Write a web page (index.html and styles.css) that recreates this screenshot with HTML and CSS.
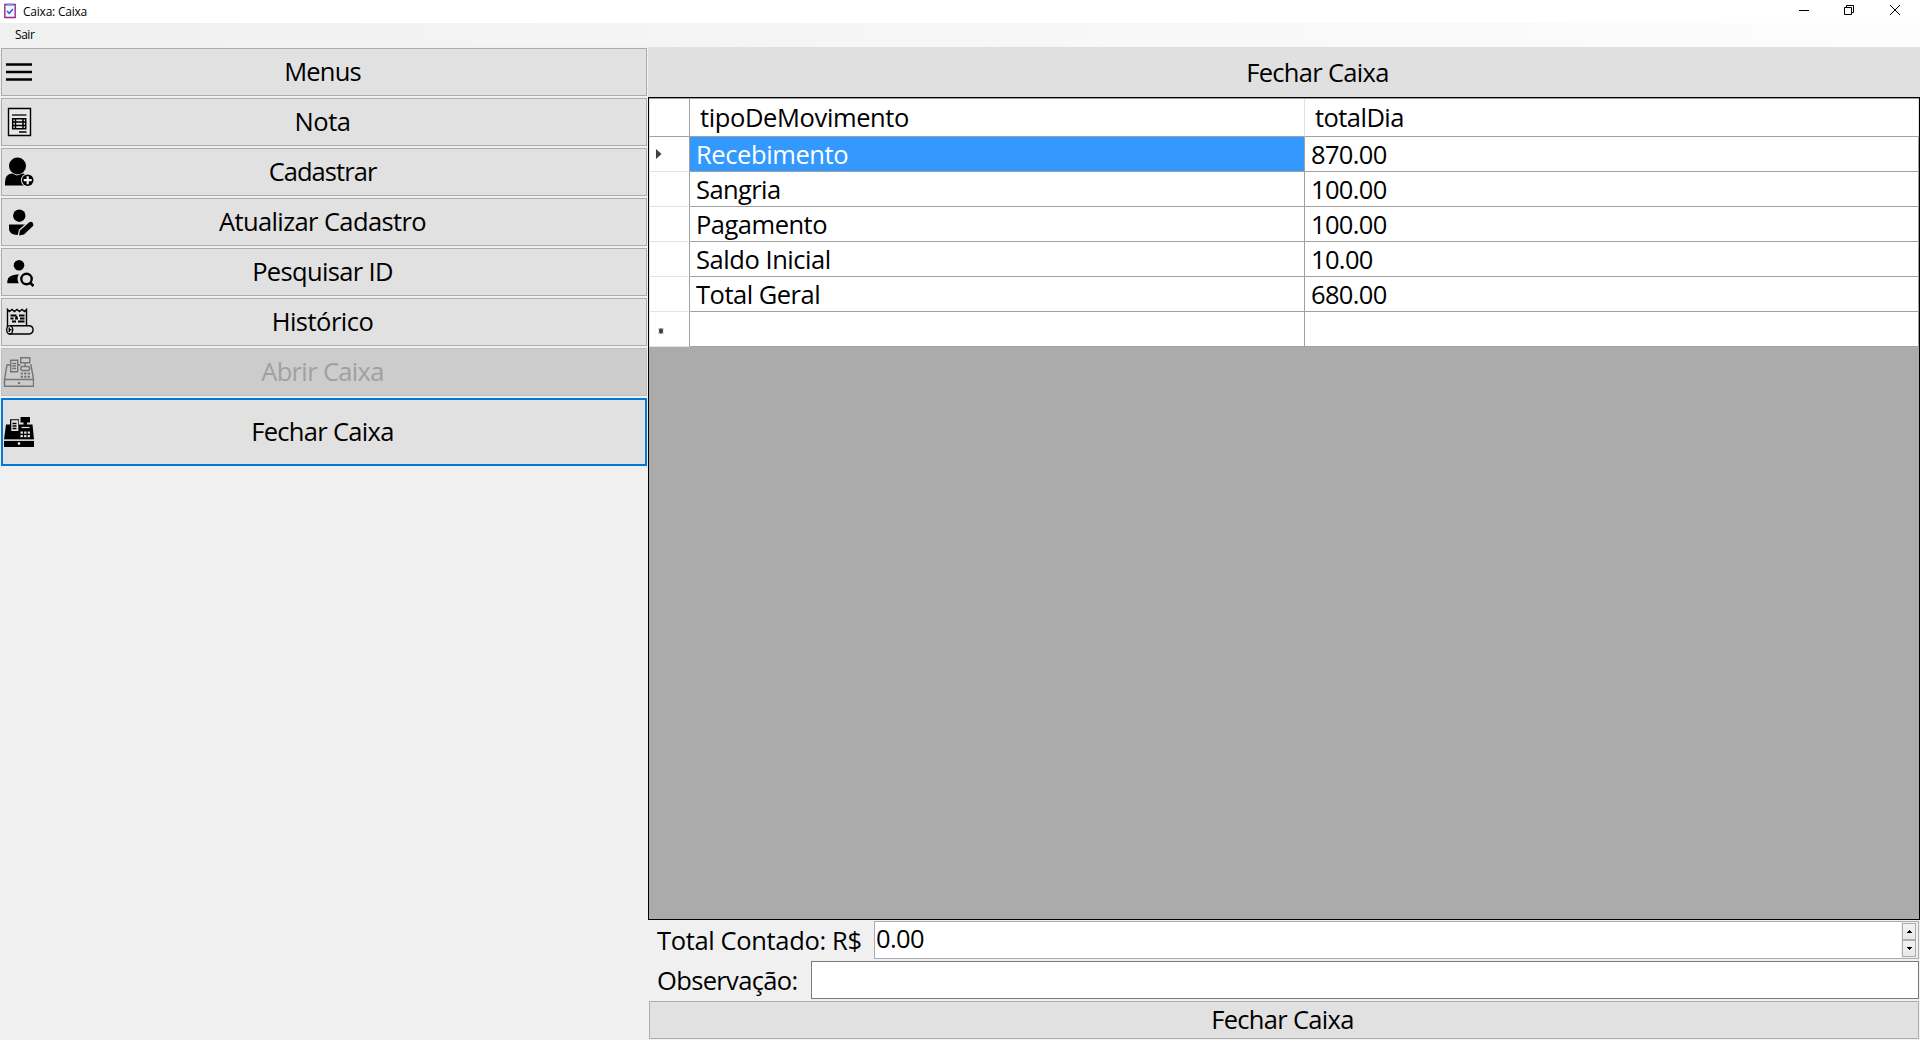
FILE: index.html
```html
<!DOCTYPE html>
<html lang="pt-BR">
<head>
<meta charset="utf-8">
<title>Caixa: Caixa</title>
<link rel="stylesheet" href="styles.css">
</head>
<body>
<div class="window">
  <header class="titlebar">
    <svg class="app-icon" width="12" height="16" viewBox="0 0 12 16"><path d="M.8 1.500h10.400v13H.8z" fill="#f4f6ff" stroke="#96288c" stroke-width="1.400"/><path d="M3 .5h6v2.300H3z" fill="#6d9be0"/><path d="M3 8l2.200 2.300L9 6" fill="none" stroke="#2864d8" stroke-width="1.500"/></svg>
    <span class="title">Caixa: Caixa</span>
    <div class="controls">
      <svg class="minimize" width="10" height="10" viewBox="0 0 10 10"><path d="M0 5.500h10"/></svg>
      <svg width="10" height="10" viewBox="0 0 10 10"><path d="M.5 2.500h7v7h-7zM2.500 2V.5h7v7H8"/></svg>
      <svg width="10" height="10" viewBox="0 0 10 10"><path d="M0 0l10 10M10 0L0 10"/></svg>
    </div>
  </header>
  <nav class="menubar"><span>Sair</span></nav>
  <main class="main">
    <aside class="sidebar">
      <button class="item"><svg class="icon" width="32" height="32" viewBox="0 0 32 32"><path d="M4 8.500h26M4 16h26M4 23.500h26" fill="none" stroke="#000" stroke-width="2.400"/></svg><span class="w-menus">Menus</span></button>
      <button class="item"><svg class="icon" width="32" height="32" viewBox="0 0 32 32"><path d="M6.500 2.500h22v27h-22z" fill="#e9e9e9" stroke="#000" stroke-width="1.400"/><path d="M10 9h14.500" stroke="#555" stroke-width="2"/><path d="M10.700 12.700h13v10h-13zM10 16h14.500M10 19.600h14.500M13.500 12v11.500M21 12v11.500" fill="none" stroke="#000" stroke-width="1.500"/><path d="M17 26h7.500" stroke="#000" stroke-width="1.500"/></svg><span class="w-nota">Nota</span></button>
      <button class="item"><svg class="icon" width="32" height="32" viewBox="0 0 32 32"><ellipse cx="15.500" cy="10" rx="8.500" ry="8.500"/><path d="M3 29.500V26q0-8 7-8.500l5 2 6-2q5 1 6 6v6z"/><circle cx="25.700" cy="24.200" r="6.800" fill="#e1e1e1"/><circle cx="25.700" cy="24.200" r="5.800"/><path d="M25.700 20.200v8M21.700 24.200h8" stroke="#f4f4f4" stroke-width="2.200"/></svg><span class="w-cadastrar">Cadastrar</span></button>
      <button class="item"><svg class="icon" width="32" height="32" viewBox="0 0 32 32"><circle cx="17.300" cy="9.700" r="6.200"/><path d="M7 18.500h17l-7.500 9-1 1.500Q7 28.500 7 23z"/><path d="M17 29.500l1-5 9-8q2-1.500 3.500 0t.5 3.500l-9 8.500z" stroke="#e1e1e1" stroke-width="2.500" paint-order="stroke"/></svg><span class="w-atualizar">Atualizar Cadastro</span></button>
      <button class="item"><svg class="icon" width="32" height="32" viewBox="0 0 32 32"><circle cx="17" cy="9.300" r="5.300"/><path d="M5.300 27.300V25q0-6 11.500-6.700-2.500 4.500 0 9z"/><circle cx="24.500" cy="23" r="5.200" fill="none" stroke="#000" stroke-width="2.400"/><path d="M28 26.500l3.500 3.500" stroke="#000" stroke-width="2.600"/></svg><span class="w-pesquisar">Pesquisar ID</span></button>
      <button class="item"><svg class="icon" width="32" height="32" viewBox="0 0 32 32"><g fill="none" stroke="#000" stroke-width="1.400"><path d="M5.500 21V3.500l2 2 2.500-2 2.500 2 2.500-2 2.500 2 2.500-2 2.500 2 2-2v16"/><path d="M8.500 9.500h6M17 9.500h5.500M8.500 12.500h3M13 12.500h3M18 12.500h4.500M10 15.500h4M16 15.500h6.500M14.500 10v2" stroke-width="1.800"/><path d="M8 19.700h19.500a4.200 4.200 0 0 1 0 8.300H8"/><ellipse cx="7.700" cy="23.800" rx="3" ry="4.200"/><path d="M7.300 21.500v4.500M7.500 23.800h2"/></g></svg><span class="w-historico">Histórico</span></button>
      <button class="item" disabled><svg class="icon" width="32" height="32" viewBox="0 0 32 32"><g fill="none" stroke="#747474" stroke-width="1.400"><path d="M8.500 9H5L2.500 23.500v6.700h29v-6.700L29 9h-1M15.500 9h3"/><path d="M2.500 23.500h29M8.700 4.200h7v11.500h-7zM10.300 7.500h3.800M10.300 10h3.800M10.300 12.500h3.800M18.700 1.700h9v5h-9zM23 6.700v3M18.700 12.500q0-2 2-2h5q2 0 2 2v1q-1 1-2 1h-5q-1 0-2-1z"/><path d="M18.700 17.500h9.300M18.700 20.700h9.300" stroke-width="2" stroke-dasharray="2.300 1.200"/></g><circle cx="17" cy="27" r="1.200" fill="#747474"/></svg><span class="w-abrir">Abrir Caixa</span></button>
      <button class="item active"><svg class="icon" width="32" height="32" viewBox="0 0 32 32"><path d="M4 8.500h4V3.300h9v5.200h4.500v-2h-3V1h9.500v5.500h-3v2h5.500L32 23.500H2zM2 24.700h30V31H2z"/><path d="M9.300 4.300h7V15h-7z" fill="#e1e1e1"/><path d="M10.500 7.500h4M10.500 10h4M10.500 12.500h4" stroke="#000" stroke-width="1.300"/><path d="M19.500 11.500h8" stroke="#e1e1e1" stroke-width="1.200"/><path d="M18.500 16.700h9.500M18.500 20.200h9.500" stroke="#e1e1e1" stroke-width="2.200" stroke-dasharray="2.400 1.200"/><path d="M2 24.200h30" stroke="#e1e1e1" stroke-width="1"/><circle cx="17" cy="27.500" r="1.300" fill="#fff"/></svg><span class="w-fechar">Fechar Caixa</span></button>
    </aside>
    <section class="panel">
      <h1 class="heading"><span class="w-fechar">Fechar Caixa</span></h1>
      <div class="grid">
        <div class="row head"><div class="rh"></div><div class="c1"><span class="w-tipo">tipoDeMovimento</span></div><div class="c2"><span class="w-total-dia">totalDia</span></div></div>
        <div class="row selected"><div class="rh"><svg width="6" height="10" viewBox="0 0 6 10"><path d="M0 0l5.500 5L0 10z" fill="#404040"/></svg></div><div class="c1"><span class="w-receb">Recebimento</span></div><div class="c2"><span class="num">870.00</span></div></div>
        <div class="row"><div class="rh"></div><div class="c1"><span class="w-sangria">Sangria</span></div><div class="c2"><span class="num">100.00</span></div></div>
        <div class="row"><div class="rh"></div><div class="c1"><span class="w-pag">Pagamento</span></div><div class="c2"><span class="num">100.00</span></div></div>
        <div class="row"><div class="rh"></div><div class="c1"><span class="w-saldo">Saldo Inicial</span></div><div class="c2"><span class="num">10.00</span></div></div>
        <div class="row"><div class="rh"></div><div class="c1"><span class="w-geral">Total Geral</span></div><div class="c2"><span class="num">680.00</span></div></div>
        <div class="row new"><div class="rh"><svg width="6" height="6" viewBox="0 0 6 6"><circle cx="3" cy="3" r="2.200" fill="#404040"/><path d="M.3 1h5.400M.3 5h5.400M3 0v6" stroke="#404040" stroke-opacity=".6"/></svg></div><div class="c1"></div><div class="c2"></div></div>
      </div>
      <div class="field"><label class="lab-total"><span class="w-contado">Total Contado: R$</span></label>
        <div class="spin"><span class="num">0.00</span>
          <div class="arrows"><b><svg width="5" height="3" viewBox="0 0 5 3"><path d="M2 0h1v1h1v1h1v1H0V2h1V1h1z"/></svg></b><b><svg width="5" height="3" viewBox="0 0 5 3"><path d="M0 0h5v1H4v1H3v1H2V2H1V1H0z"/></svg></b></div>
        </div>
      </div>
      <div class="field"><label class="lab-obs"><span class="w-obs">Observação:</span></label><div class="text"></div></div>
      <button class="submit"><span class="w-fechar">Fechar Caixa</span></button>
    </section>
  </main>
</div>
</body>
</html>
```
FILE: styles.css
```css
* { box-sizing: border-box; }
body { margin: 0; background: #f0f0f0; color: #000; font: 25.5px/34px "Open Sans", sans-serif; overflow: hidden; }
button { font: inherit; color: inherit; margin: 0; padding: 0; border-radius: 0; }
svg { display: block; flex: none; }
span { white-space: nowrap; }
.window { width: 1920px; height: 1040px; display: flex; flex-direction: column; }
.titlebar { height: 23px; background: #fff; display: flex; align-items: center; padding-left: 4px; font-size: 12px; line-height: 16px; }
.app-icon { margin-top: -2px; }
.title { margin-left: 7px; letter-spacing: -.22px; }
.controls { margin: -3px 20px 0 auto; display: flex; gap: 36px; }
.controls svg { fill: none; stroke: #000; stroke-width: 1; }
.controls .minimize { margin-right: -1px; }
.menubar { height: 24px; padding: 3px 0 0 15px; background: linear-gradient(90deg, #f0f0f0, #fdfdfd); font-size: 12px; line-height: 17px; letter-spacing: -.45px; }
.main { height: 993px; display: flex; }
.sidebar { width: 648px; padding: 1px 1px 0; display: flex; flex-direction: column; gap: 2px; }
.item { width: 646px; height: 48px; border: 1px solid #adadad; background: #e1e1e1; display: grid; align-items: center; justify-items: center; }
.item > * { grid-area: 1 / 1; }
.item span { padding: 0 3px 2px 0; }
.item .icon { justify-self: start; }
.item:disabled { background: #ccc; border-color: #bfbfbf; color: #a0a0a0; }
.item.active { height: 68px; border: 2px solid #0078d7; }
.item.active .icon { margin-left: -1px; }
.panel { width: 1272px; display: flex; flex-direction: column; }
.heading { height: 50px; margin: 0; background: #e0e0e0; display: flex; align-items: center; justify-content: center; padding-left: 67px; font: inherit; }
.grid { height: 823px; border: 1px solid #000; background: #ababab; }
.row { height: 35px; display: grid; grid-template-columns: 41px 615px 614px; background: #fff; }
.row > div { display: flex; align-items: center; border-right: 1px solid #a0a0a0; border-bottom: 1px solid #a0a0a0; padding-left: 6px; }
.row > .rh { border-bottom-color: #e3e3e3; border-left: 1px solid #e3e3e3; }
.head { height: 39px; border-top: 1px solid #a0a0a0; }
.head > .rh { border-bottom-color: #a0a0a0; }
.head > .c1, .head > .c2 { border-right-color: #e3e3e3; padding: 0 0 1px 10px; }
.selected .c1 { background: #39f; color: #fff; }
.new > .rh { padding: 3px 0 0 8px; }
.field { display: flex; height: 38px; margin: 1px 1px 0 0; }
.field + .field { margin-top: 2px; }
label { padding: 2px 0 0 9px; }
.lab-total { width: 226px; }
.lab-obs { width: 163px; }
.spin { flex: 1; background: #fff; border: 1px solid #abadb3; display: flex; padding-left: 1px; }
.spin .num { margin-top: -1px; }
.arrows { margin-left: auto; padding: 1px; background: #f0f0f0; display: flex; flex-direction: column; width: 17px; }
.arrows b { width: 14px; height: 17px; border: 1px solid #acacac; background: linear-gradient(#f2f2f2, #e8e8e8); display: grid; place-items: center; }
.text { flex: 1; border: 1px solid #7a7a7a; background: #fff; }
.submit { width: 1270px; height: 38px; margin: 2px 0 0 1px; padding: 0 3px 2px 0; border: 1px solid #adadad; background: #e1e1e1; line-height: 34px; }

.w-menus { letter-spacing: -.8px; }
.w-nota { letter-spacing: -.4px; }
.w-cadastrar { letter-spacing: -.95px; }
.w-atualizar { letter-spacing: -.61px; }
.w-pesquisar { letter-spacing: -.65px; }
.w-historico { letter-spacing: -.5px; }
.w-abrir { letter-spacing: -.65px; }
.w-fechar { letter-spacing: -.68px; }
.w-tipo { letter-spacing: -.38px; }
.w-total-dia { letter-spacing: -.55px; }
.w-receb { letter-spacing: -.4px; }
.w-sangria { letter-spacing: -.6px; }
.w-pag { letter-spacing: -.5px; }
.w-saldo { letter-spacing: -.45px; }
.w-geral { letter-spacing: -.5px; }
.num { letter-spacing: -.65px; }
.w-contado { letter-spacing: -.35px; }
.w-obs { letter-spacing: -.65px; }
```
